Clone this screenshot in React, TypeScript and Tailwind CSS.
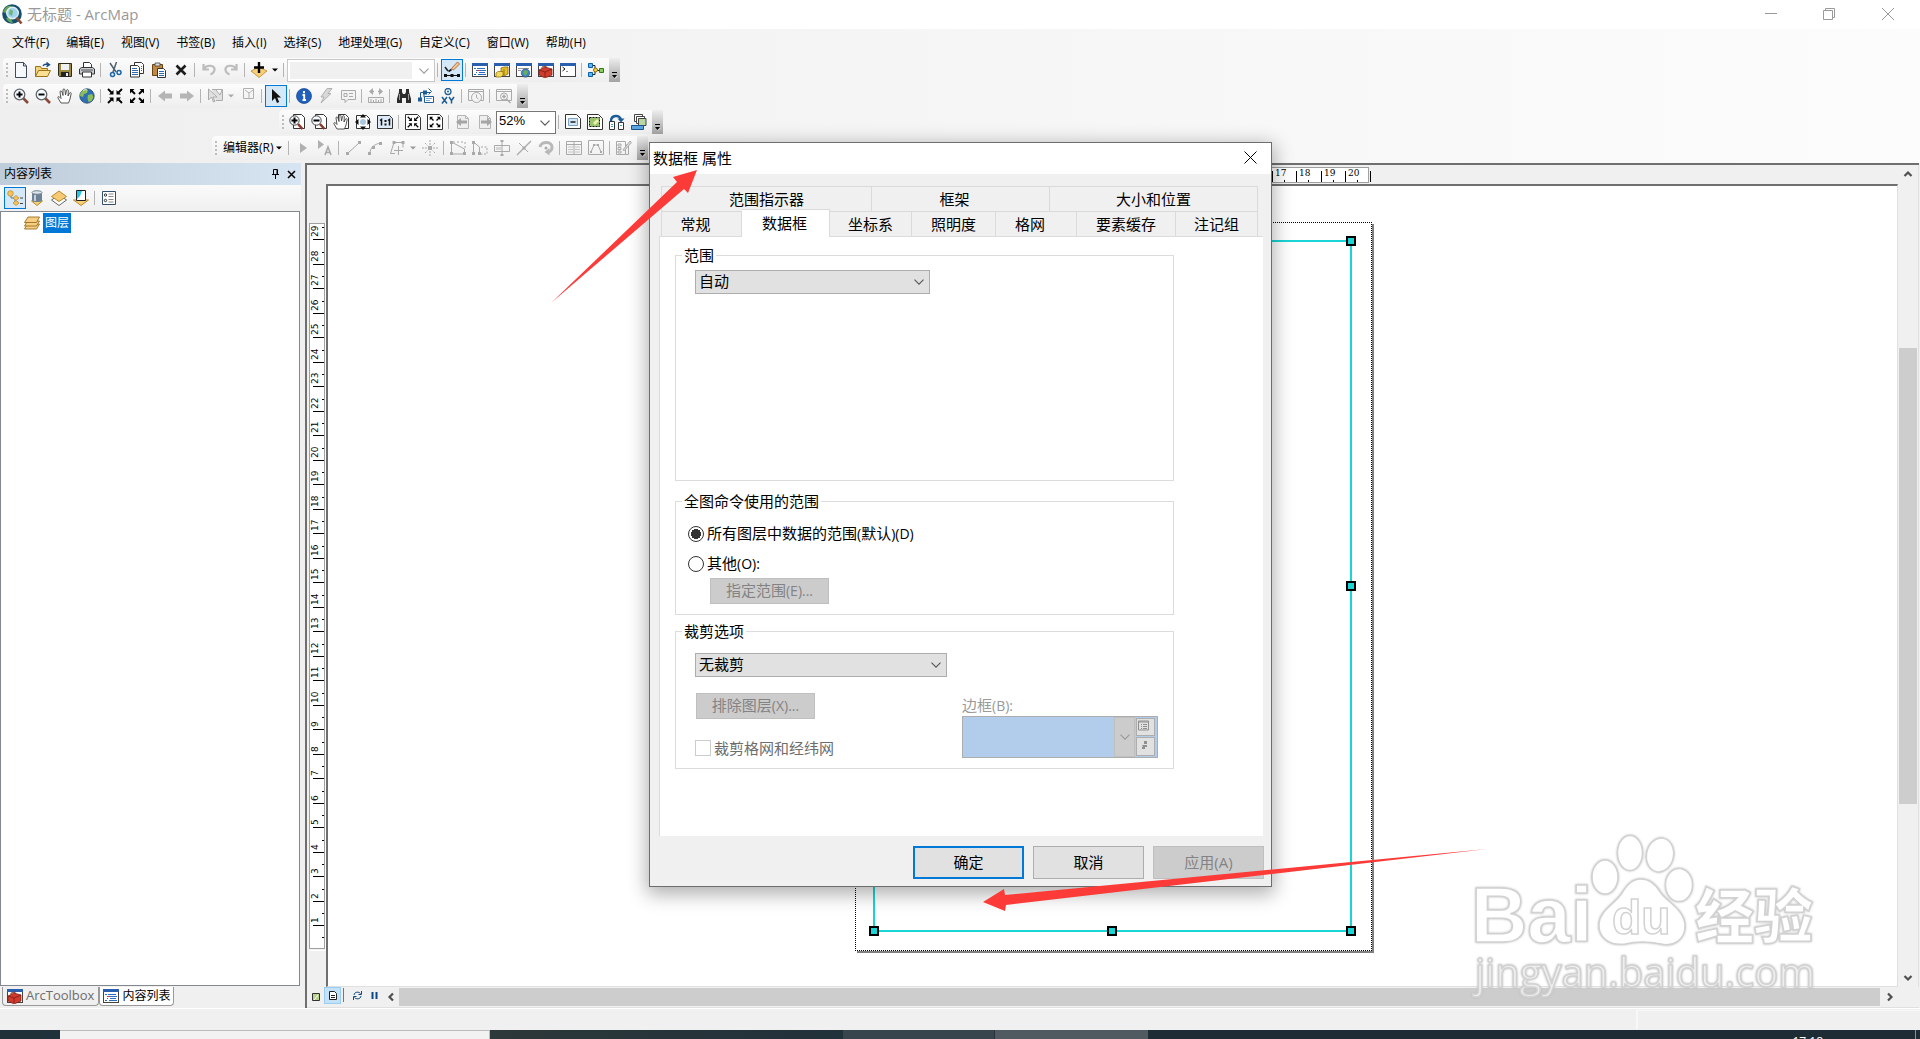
import React from "react";

const FONT = "font-['Open_Sans','Noto_Sans_CJK_SC',sans-serif]";

type Kids = { children?: React.ReactNode };

function Ic({ children }: Kids) {
  return (
    <svg width="16" height="16" viewBox="0 0 16 16" fill="none" aria-hidden="true">
      {children}
    </svg>
  );
}

function Tool({ label, active, children }: Kids & { label: string; active?: boolean }) {
  return (
    <button
      type="button"
      aria-label={label}
      className={
        active
          ? "flex h-[22px] w-[22px] items-center justify-center border border-[#0078d7] bg-[#d5e8f7]"
          : "flex h-[22px] w-[22px] items-center justify-center"
      }
    >
      {children}
    </button>
  );
}

const Sep = () => <span className="mx-[2px] h-[14px] w-[2px] border-l border-[#b4b4b4]" />;

const Grip = () => (
  <span className="ml-[3px] mr-px flex w-[3px] flex-col gap-[2px]">
    {[0, 1, 2, 3].map((i) => (
      <span key={i} className="h-[2px] w-[2px] bg-[#bdbdbd]" />
    ))}
  </span>
);

const DropArrow = ({ color = "#000" }: { color?: string }) => (
  <svg width="11" height="8" viewBox="0 0 11 8" aria-hidden="true">
    <path d="M2 2.5h6l-3 3z" fill={color} />
  </svg>
);

const Cap = () => (
  <button
    type="button"
    aria-label="工具栏选项"
    className="ml-[2px] flex h-full w-[11px] items-end justify-center bg-linear-to-b from-[#eeeeee] to-[#a3a3a3] pb-[3px]"
  >
    <svg width="7" height="7" viewBox="0 0 7 7" aria-hidden="true">
      <path d="M1 .5h5" stroke="#000" />
      <path d="M1 3h5L3.5 6z" fill="#000" />
      <path d="M6.5 4L4 6.5" stroke="#fff" strokeWidth=".7" />
    </svg>
  </button>
);

const Chevron = ({ color = "#555" }: { color?: string }) => (
  <svg width="10" height="6" viewBox="0 0 10 6" fill="none" aria-hidden="true">
    <path d="M.5 .7L5 5.2 9.5 .7" stroke={color} strokeWidth="1.1" />
  </svg>
);

/* ---------- icon drawings ---------- */
const Sheet = ({ c = "#333", f = "#fff" }: { c?: string; f?: string }) => (
  <path d="M2.5 1.5h8l3 3v10h-11zM10.5 1.5v3h3" stroke={c} fill={f} />
);
const Win = ({ children }: Kids) => (
  <Ic>
    <rect x=".5" y="1.5" width="15" height="13" fill="#fff" stroke="#444" />
    <path d="M0 2.5h16" stroke="#2a5fae" strokeWidth="3" />
    {children}
  </Ic>
);
const NewI = <Ic><path d="M2.500.5h8l3 3.500v11.500h-11z" fill="#f5f9fe" stroke="#3d4a5c" /><path d="M10.500.5v3.500h3" stroke="#3d4a5c" /></Ic>;
const OpenI = (
  <Ic>
    <path d="M.5 14.500v-10h5l1 2h6v3" fill="#f3d27a" stroke="#9a741c" />
    <path d="M.5 14.500l3-6h12l-3 6z" fill="#fbdf92" stroke="#9a741c" />
    <path d="M8 4c1-2 3-2 5-1.500M11.500.500l3 2.200-3 2" stroke="#1d4f86" strokeWidth="1.400" />
  </Ic>
);
const SaveI = (
  <Ic>
    <path d="M1.500 1.500h13v13h-12l-1-1z" fill="#9b8a3e" stroke="#2f2c1c" />
    <path d="M4 2h8v6H4z" fill="#eef1f6" /><path d="M4 10h8v5H4z" fill="#222" /><path d="M9 11h2v3H9z" fill="#eee" />
  </Ic>
);
const PrintI = (
  <Ic>
    <path d="M4.500 6V.5h6l2 2V6" fill="#fff" stroke="#333" />
    <path d="M.5 7l2-1.500h11l2 1.500v5h-15z" fill="#c9ccd0" stroke="#333" />
    <path d="M3.500 10h9v5h-9z" fill="#fff" stroke="#333" /><path d="M2 8h12" stroke="#555" />
  </Ic>
);
const CutI = (
  <Ic>
    <path d="M3 1l6 9M9.500 0L6 10" stroke="#4e6070" strokeWidth="1.500" />
    <circle cx="5.500" cy="12.500" r="2" stroke="#1f64a5" strokeWidth="1.500" /><circle cx="12" cy="10.500" r="2" stroke="#1f64a5" strokeWidth="1.500" />
  </Ic>
);
const CopyI = (
  <Ic>
    <path d="M5.500.5h7l2 2v9h-9z" fill="#fff" stroke="#333" />
    <path d="M1.500 3.500h7l2 2v9.500h-9z" fill="#fff" stroke="#333" />
    <path d="M3 6.500h5M3 8.500h6M3 10.500h6M3 12.500h6M12 4.500h1M12 6.500h1M12 8.500h1" stroke="#2d69ae" />
  </Ic>
);
const PasteI = (
  <Ic>
    <path d="M1.500 2.500h10v11h-10z" fill="#c08840" stroke="#6b4313" />
    <path d="M4 1h5v3H4z" fill="#ddd" stroke="#444" strokeWidth=".8" />
    <path d="M6.500 6.500h6l2 2v7h-8z" fill="#fff" stroke="#333" />
    <path d="M8 9.500h5M8 11.500h5M8 13.500h5" stroke="#2d69ae" />
  </Ic>
);
const DelI = <Ic><path d="M3.500 3.500l9 9M12.500 3.500l-9 9" stroke="#1c1c1c" strokeWidth="2.600" /></Ic>;
const UndoI = <Ic><path d="M2.500 2v5.500H8M3 7c2-4 9-4.500 10.500-.5.500 2.500-1 4.500-4 6" stroke="#bdbdbd" strokeWidth="2.200" /></Ic>;
const RedoI = <Ic><path d="M13.500 2v5.500H8M13 7c-2-4-9-4.500-10.500-.5-.5 2.500 1 4.500 4 6" stroke="#bdbdbd" strokeWidth="2.200" /></Ic>;
const AddI = (
  <Ic>
    <path d="M0 9l8-4 8 4-8 6.500z" fill="#f6cf78" stroke="#b98a2a" strokeWidth=".8" />
    <path d="M8 0v11M3 5.500h10" stroke="#000" strokeWidth="2.400" />
  </Ic>
);
const EditI = (
  <Ic>
    <path d="M1 5l3 4" stroke="#222" strokeWidth="1.500" /><path d="M7.500 6.500L13.500 0l2 2-6 6z" fill="#f5c98b" stroke="#a3502c" strokeWidth=".8" /><path d="M4.500 9.500L7.500 7.500" stroke="#111" strokeWidth="1.600" />
    <path d="M1 13.500h14" stroke="#111" /><path d="M0 12h3v3H0zM6.500 12h3v3h-3zM13 12h3v3h-3z" fill="#111" />
  </Ic>
);
const TocI = <Win><path d="M2 6.500h2M5 6.500h8M4 8.500h2M7 8.500h7M4 10.500h1M7 10.500h6M2 12.500h2M6 12.500h8" stroke="#2a6cc0" /><path d="M5 8.500h2" stroke="#d33" /></Win>;
const CatI = <Win><path d="M7 10V6l3-1h4v7l-4 2z" fill="#e5bd27" stroke="#8a6b06" strokeWidth=".8" /><path d="M10 7v6" stroke="#8a6b06" strokeWidth=".8" /><path d="M2 11l2-1.500h5V13l-2 2H2z" fill="#f3d95d" stroke="#8a6b06" strokeWidth=".7" /></Win>;
const SearchI = <Win><path d="M2 6.500h11M2 8.500h3" stroke="#999" /><circle cx="9.500" cy="11" r="4.200" fill="#3a83c9" stroke="#345" strokeWidth=".6" /><path d="M7 10l2-2 3 1-1 3-2 2z" fill="#6cae57" /></Win>;
const ToolboxI = <Win><path d="M1 8l6-3 7 2v6l-7 3-6-3z" fill="#cf3b2c" stroke="#7c1a12" strokeWidth=".7" /><path d="M1 8l6 2 7-3M7 10v5M4 6.500V5l4-1v2" stroke="#7c1a12" strokeWidth=".8" /></Win>;
const PyI = <Win><path d="M2.500 5l2.500 2-2.500 2" stroke="#111" /><path d="M6 9.500h2" stroke="#888" /></Win>;
const ModelI = (
  <Ic>
    <path d="M4 3.500h3v5M4 12.500h3v-4h5" stroke="#222" />
    <path d="M.5 1.500h4v4h-4zM.5 10.500h4v4h-4z" fill="#5db6f0" stroke="#0a61a5" /><circle cx="7.500" cy="8" r="2" fill="#f3d149" stroke="#8a6b06" /><path d="M11.500 6.500h4v4h-4z" fill="#86cf5d" stroke="#2f7a17" />
  </Ic>
);
const Zoomer = ({ plus }: { plus?: boolean }) => (
  <Ic>
    <path d="M10 10l5 5" stroke="#8a4a3a" strokeWidth="2.600" /><circle cx="6.500" cy="6.500" r="5.300" fill="#f4f9fd" stroke="#60666c" strokeWidth="1.300" />
    <path d={plus ? "M3.500 6.500h6M6.500 3.500v6" : "M3.500 6.500h6"} stroke="#000" strokeWidth="1.900" />
  </Ic>
);
const Hand = () => (
  <path d="M4 15l-3-5c-.5-1.500 1-2 2-.5l1 1L3 4c0-1.500 1.500-1.500 2 0l1 3.500V2c0-1.500 1.700-1.500 2 0l.5 5 1-4.500c.5-1.500 2-1 1.800.5L11 8l1.500-3c1-1 2-.3 1.600 1L13 11l-1.500 4z" fill="#fff" stroke="#444" strokeWidth=".9" />
);
const GlobeI = (
  <Ic>
    <circle cx="8" cy="8" r="7.200" fill="#2f6fb3" stroke="#24456c" strokeWidth=".8" />
    <path d="M3 3c2-2 5-2 6-1l-1 3-3 1-1 3-3-1c0-2 1-4 2-5zM9 7l4-1 1.500 3-2 4-3 1-1-4z" fill="#8cbf5a" /><path d="M4 2.500c2-1 3-1 4-.5" stroke="#e8f3dc" />
  </Ic>
);
const InArrows = ({ c = "#000" }: { c?: string }) => (
  <>
    <path d="M1 1l3.500 3.500M15 1l-3.500 3.500M1 15l3.500-3.500M15 15l-3.500-3.500" stroke={c} strokeWidth="1.800" />
    <path d="M6.500 2v4.500H2zM9.500 2v4.500H14zM6.500 14V9.500H2zM9.500 14V9.500H14z" fill={c} />
  </>
);
const OutArrows = ({ c = "#000" }: { c?: string }) => (
  <>
    <path d="M2 2l4 4M14 2l-4 4M2 14l4-4M14 14l-4-4" stroke={c} strokeWidth="1.800" />
    <path d="M1 5.500V1h4.500zM15 5.500V1h-4.500zM1 10.500V15h4.500zM15 10.500V15h-4.500z" fill={c} />
  </>
);
const LeftI = <Ic><path d="M1 8l7-5.500v3h7v5H8v3z" fill="#b5b5b5" /></Ic>;
const RightI = <Ic><path d="M15 8L8 2.500v3H1v5h7v3z" fill="#b5b5b5" /></Ic>;
const SelFeatI = <Ic><path d="M5 1.500h10.500v11H9M9 2l4 5 2-5M1.500 1v11l3-3 2 5 1.500-.7-2-4.300h4z" fill="#e0e0e0" stroke="#aaa" /></Ic>;
const ClearI = <Ic><path d="M3.500.5h10v10h-10zM5 2l4 3 4-3M9 5v5" stroke="#b0b0b0" /></Ic>;
const PointerI = <Ic><path d="M4 1v12l3-3 2 5 2.200-1-2-4.500H13z" fill="#111" /></Ic>;
const InfoI = <Ic><circle cx="8" cy="8" r="7.500" fill="#1f5fbd" stroke="#164488" strokeWidth=".7" /><path d="M8 3v2.200M6.500 7H8.200v5M6.500 12h3.500" stroke="#fff" strokeWidth="1.900" /></Ic>;
const BoltI = <Ic><path d="M9 .5h5l-4 5h3L3 15l3-6H3z" fill="#d8d8d8" stroke="#b0b0b0" /></Ic>;
const NoteI = <Ic><path d="M1.500 2.500h14v9H8l-3 3v-3H1.500z" fill="#f3f3f3" stroke="#aaa" /><path d="M4 5.500h3v3H4zM9 5.500h4M9 8.500h4" stroke="#aaa" /></Ic>;
const MeasureI = <Ic><path d="M2 3.500h4M10 3.500h4" stroke="#aaa" strokeWidth="1.600" /><path d="M5 0v7L1 3.500zM11 0v7l4-3.500z" fill="#aaa" /><path d="M.5 9.500h15v5H.5zM3 14v-3M5.500 14v-2M8 14v-3M10.500 14v-2M13 14v-3" stroke="#aaa" /></Ic>;
const FindI = <Ic><path d="M3 1h3v3l1 2h2l1-2V1h3v3l2 7v4h-5v-5H6v5H1v-4l2-7z" fill="#2b2b2b" /><path d="M3.500 6v6M12.500 6v6" stroke="#999" /></Ic>;
const RouteI = <Ic><path d="M2.500 11V4.500H13M6 9V4.500M10.500.5l3 3-3 3" stroke="#1d5d96" /><path d="M0 9.500h4v4H0zM5 2.500h4v4H5z" fill="#1d5d96" /><path d="M6.500 8.500h9v6h-9z" fill="#fff" stroke="#1d5d96" /><path d="M8 10.500h6M8 12.500h4" stroke="#7ba6cb" /></Ic>;
const XyI = <Ic><circle cx="8" cy="3.500" r="3" stroke="#1d5d96" strokeWidth="1.300" /><circle cx="8" cy="3.500" r="1" fill="#1d5d96" /><path d="M2 9l5 6.500M7 9l-5 6.500M9 9l2.500 3.500v3M14 9l-2.500 3.500" stroke="#1d5d96" strokeWidth="1.500" /></Ic>;
const TimeI = <Ic><path d="M.5 1.500h15v11H.5zM.5 3.500h15" stroke="#aaa" /><circle cx="8.500" cy="9.500" r="5" fill="#f4f4f4" stroke="#aaa" /><path d="M8.500 6.500v3l2 1.500" stroke="#aaa" /></Ic>;
const ViewerI = <Ic><path d="M.5 1.500h15v11H.5zM.5 3.500h15" stroke="#aaa" /><circle cx="8" cy="8.500" r="3.500" fill="#f4f4f4" stroke="#aaa" /><path d="M6 8.500h4M8 6.500v4M10.500 11l4 4" stroke="#aaa" strokeWidth="1.300" /></Ic>;
const LZoom = ({ plus }: { plus?: boolean }) => (
  <Ic>
    <path d="M4.500.5h8l3 3v11h-11z" fill="#fff" stroke="#333" /><path d="M9 10l4.500 5" stroke="#8a3a2a" strokeWidth="2.600" />
    <circle cx="5.500" cy="6.500" r="4.700" fill="#f4f9fd" stroke="#444" /><path d={plus ? "M2.500 6.500h6M5.500 3.500v6" : "M2.500 6.500h6"} stroke="#000" strokeWidth="2" />
  </Ic>
);
const LPanI = <Ic><path d="M5.500.5h7l3 3v11h-10z" fill="#fff" stroke="#333" /><Hand /></Ic>;
const LWholeI = <Ic><path d="M1.500 1.500h10l3 3v10h-13z" fill="#fff" stroke="#333" /><path d="M8 0l3 3.500H5zM8 16l3-3.500H5zM0 8l3.500-3v6zM16 8l-3.500-3v6z" fill="#111" /><circle cx="8" cy="8" r="3" fill="#aac9e0" /></Ic>;
const L11I = <Ic><path d="M.5 1.500h12l3 3v10H.5z" fill="#dcebf7" stroke="#333" /><path d="M3 6.500l1.500-1v6M11 6.500l1.500-1v6" stroke="#111" strokeWidth="1.500" /><path d="M7.500 6h2v2h-2zM7.500 9.500h2v2h-2z" fill="#111" /></Ic>;
const LInI = <Ic><path d="M.5.5h12l3 3v12H.5z" fill="#fff" stroke="#333" /><g transform="translate(2 2) scale(.75)"><InArrows /></g></Ic>;
const LOutI = <Ic><path d="M.5.5h12l3 3v12H.5z" fill="#fff" stroke="#333" /><g transform="translate(2 2) scale(.75)"><OutArrows /></g></Ic>;
const LBackI = <Ic><Sheet c="#b5b5b5" f="#eee" /><path d="M1 8l5-4v2.500h6v3H6V12z" fill="#a5a5a5" /></Ic>;
const LFwdI = <Ic><Sheet c="#b5b5b5" f="#eee" /><path d="M15 8l-5-4v2.500H4v3h6V12z" fill="#a5a5a5" /></Ic>;
const LDraftI = <Ic><path d="M.5.5h11l4 4v10H.5z" fill="#fff" stroke="#333" /><path d="M3.500 4.500h9v7h-9z" fill="#d5e6f5" stroke="#7aa3c8" /><path d="M5.500 8h5" stroke="#111" strokeWidth="1.400" /></Ic>;
const LFocusI = <Ic><path d="M.5.5h11l4 4v11H.5z" fill="#fff" stroke="#333" /><path d="M2.500 3.500h10v9h-10z" fill="#9cc46a" stroke="#111" strokeDasharray="2 1" /><path d="M6 9l4-4 2 2-4 4z" fill="#eef0b0" /></Ic>;
const LChangeI = <Ic><path d="M2 7c0-6 9-7 10-1" stroke="#1d5d96" strokeWidth="2.400" /><path d="M8.500 4.500h7l-3.500 4z" fill="#1d5d96" /><path d="M.5 7.500h5v8h-5zM9.500 8.500h5v7h-5z" fill="#fff" stroke="#333" /><path d="M2 10.500h2M2 12.500h2M11 11.500h2" stroke="#4a9" /></Ic>;
const LDdpI = <Ic><path d="M3.500.5h8v7h-8z" fill="#fff" stroke="#444" /><path d="M5.500 2.500h8v7h-8z" fill="#fff" stroke="#444" /><path d="M7.500 4.500h7.500v7h-7.500z" fill="#b9d7a5" stroke="#444" /><path d="M.5 11.500h12v4H.5z" fill="#5ba4e0" stroke="#17568f" /></Ic>;

const g = "#a9a9a9";
const EArrI = <Ic><path d="M5 3v10l7-5z" fill="#b0b0b0" /></Ic>;
const EAnnI = <Ic><path d="M1 0v9l6-4.500z" fill="#b0b0b0" /><path d="M8 15l3-8 3 8M9 12.500h4" stroke={g} strokeWidth="1.600" /></Ic>;
const ELineI = <Ic><path d="M3 13L14 3" stroke={g} /><path d="M1 12h3v3H1zM13 1h3v3h-3z" fill={g} /></Ic>;
const EArcI = <Ic><path d="M3 13c0-5 4-9 11-10" stroke={g} /><path d="M1 12h3v3H1zM5 6h3v3H5zM12 2h3v3h-3z" fill={g} /></Ic>;
const ETraceI = <Ic><path d="M1.500 13.500L5 2.500h9v5M1.500 13.500H6M9.500 6v9M5 10.500h9" stroke={g} /><path d="M3.500 1h3v3h-3zM12.500 1h3v3h-3z" fill={g} /></Ic>;
const EPointI = <Ic><path d="M8 0v5M8 11v5M0 8h5M11 8h5M3 3l2.500 2.500M13 3l-2.500 2.500M3 13l2.500-2.500M13 13l-2.500-2.500" stroke={g} strokeDasharray="2 1" /><path d="M6 6h4v4H6z" fill={g} /></Ic>;
const EVertI = <Ic><path d="M1.500 2v12h13V9L1.500 2" stroke={g} /><path d="M3 2h12v7" stroke={g} strokeDasharray="2 2" /><path d="M0 1h3v3H0zM0 12h3v3H0zM13 12h3v3h-3z" fill={g} /></Ic>;
const EReshI = <Ic><path d="M1.500 2v12M1.500 2l6 5v7" stroke={g} /><path d="M9 7h6v7H9" stroke={g} strokeDasharray="2 1.500" /><path d="M0 1h3v3H0zM0 12h3v3H0zM6 12h3v3H6z" fill={g} /></Ic>;
const ECutI = <Ic><path d="M.5 5.500h15v6H.5zM8 0v16" stroke={g} /><path d="M2 7h5v3H2z" fill="#d5d5d5" /><path d="M6.500 0h3v2h-3zM6.500 14h3v2h-3z" fill={g} /></Ic>;
const ESplitI = <Ic><path d="M1 15L15 1" stroke={g} strokeWidth="1.300" /><path d="M3 3l9 9" stroke={g} strokeDasharray="5 3" /><path d="M6.500 6.500h3v3h-3z" fill={g} /></Ic>;
const ERotI = <Ic><path d="M2 7c1-6 12-6 12 0 0 3-2 5-4 5" stroke="#b8b8b8" strokeWidth="3" /><path d="M6.500 12l5-4v7.500z" fill="#b8b8b8" /><circle cx="8" cy="8" r="1.500" fill={g} /></Ic>;
const EAttrI = <Ic><path d="M.5 1.500h15v13H.5zM.5 4.500h15M8 2v12" stroke={g} /><path d="M2 7h5M2 9.500h5M2 12h5M9 7h5M9 9.500h5M9 12h5" stroke="#c5c5c5" /></Ic>;
const ESkI = <Ic><path d="M.5.500h15v14H.5zM3 12l3-7h4l3 7" stroke={g} /><path d="M5 4h2v2H5zM9 4h2v2H9zM2 11h2v2H2zM12 11h2v2h-2z" fill={g} /></Ic>;
const ECreateI = <Ic><path d="M.5 1.500h9v13h-9zM9.500 5h3v9.500h-3z" stroke={g} /><path d="M2 4h3v2H2zM2 7.500h3v2H2zM2 11h3v2H2z" stroke={g} /><path d="M7 10l7-9 1.500 1.500-7 8z" fill="#ddd" stroke={g} /></Ic>;

const TreeI = <Ic><path d="M4 4v4h4M8 8v4h3" stroke="#5a7d96" /><circle cx="3.500" cy="3.500" r="2.800" fill="#f6c45f" stroke="#b98427" strokeWidth=".7" /><path d="M6 8l3-2.500L12 8l-3 2.500zM6 13l3-2.500L12 13l-3 2.500z" fill="#f6c45f" stroke="#b98427" strokeWidth=".7" /><path d="M13 8h3M13 13.500h3" stroke="#444" /></Ic>;
const SourceI = <Ic><path d="M2.500 11h11L8 15.500z" fill="#f6cf78" stroke="#b98a2a" /><path d="M3 2.500v8c2 2 8 2 10 0v-8z" fill="#6e8296" /><ellipse cx="8" cy="2.500" rx="5" ry="1.800" fill="#dfe6ec" stroke="#6e8296" /><path d="M6 5v6" stroke="#c5d0da" strokeWidth="2" /></Ic>;
const VisI = <Ic><path d="M.5 10L8 5l7.500 5L8 15.500z" fill="#fff" stroke="#666" /><path d="M.5 6.500L8 1l7.500 5.500L8 11.500z" fill="#f6c976" stroke="#b98a2a" /></Ic>;
const SelI = <Ic><path d="M.5 10h15L8 15.500z" fill="#f6cf78" stroke="#b98a2a" /><path d="M3.500.5h9v10h-9z" fill="#fff" stroke="#222" /><path d="M4 1h5l-2 5-3 3z" fill="#24c7ea" /></Ic>;
const OptI = <Ic><path d="M1.500 1.500h13v13h-13z" fill="#fff" stroke="#33516e" /><circle cx="4.500" cy="5" r="1.200" stroke="#333" /><circle cx="4.500" cy="10.500" r="1.200" stroke="#333" /><path d="M7.500 4h5M7.500 6.500h5M7.500 9.500h5M7.500 12h5" stroke="#888" /></Ic>;

const menus = ["文件(F)", "编辑(E)", "视图(V)", "书签(B)", "插入(I)", "选择(S)", "地理处理(G)", "自定义(C)", "窗口(W)", "帮助(H)"];

function Bar({ children, start = "" }: Kids & { start?: string }) {
  return (
    <div
      role="toolbar"
      className={`flex h-6 w-fit items-center rounded-l-sm bg-linear-to-b from-[#fcfcfc] to-[#eeeeee] ${start}`}
    >
      {children}
    </div>
  );
}

function Toolbars() {
  return (
    <div className="flex flex-col gap-[2px] pl-[3px] pt-[2px]">
      <Bar>
        <Grip />
        <Tool label="新建">{NewI}</Tool><Tool label="打开">{OpenI}</Tool><Tool label="保存">{SaveI}</Tool><Tool label="打印">{PrintI}</Tool>
        <Sep />
        <Tool label="剪切">{CutI}</Tool><Tool label="复制">{CopyI}</Tool><Tool label="粘贴">{PasteI}</Tool><Tool label="删除">{DelI}</Tool>
        <Sep />
        <Tool label="撤消">{UndoI}</Tool><Tool label="恢复">{RedoI}</Tool>
        <Sep />
        <Tool label="添加数据">{AddI}</Tool><DropArrow />
        <Sep />
        <div className="relative h-[23px] w-[148px] border border-[#c8c8c8] bg-white p-[2px]">
          <select aria-label="比例" disabled className="h-full w-[122px] appearance-none bg-[#f0f0f0]" />
          <span className="absolute right-[5px] top-[8px]"><Chevron color="#999" /></span>
        </div>
        <Sep />
        <Tool label="编辑器工具条" active>{EditI}</Tool>
        <Sep />
        <Tool label="内容列表">{TocI}</Tool><Tool label="目录">{CatI}</Tool><Tool label="搜索">{SearchI}</Tool><Tool label="ArcToolbox">{ToolboxI}</Tool><Tool label="Python">{PyI}</Tool>
        <Sep />
        <Tool label="模型构建器">{ModelI}</Tool>
        <Cap />
      </Bar>
      <Bar>
        <Grip />
        <Tool label="放大"><Zoomer plus /></Tool><Tool label="缩小"><Zoomer /></Tool><Tool label="平移"><Ic><Hand /></Ic></Tool><Tool label="全图">{GlobeI}</Tool>
        <Sep />
        <Tool label="固定比例放大"><Ic><InArrows /></Ic></Tool><Tool label="固定比例缩小"><Ic><OutArrows /></Ic></Tool>
        <Sep />
        <Tool label="后退">{LeftI}</Tool><Tool label="前进">{RightI}</Tool>
        <Sep />
        <Tool label="选择要素">{SelFeatI}</Tool><DropArrow color="#aaa" /><Tool label="清除选择">{ClearI}</Tool>
        <Sep />
        <Tool label="选择元素" active>{PointerI}</Tool>
        <Sep />
        <Tool label="识别">{InfoI}</Tool><Tool label="超链接">{BoltI}</Tool><Tool label="HTML 弹出">{NoteI}</Tool>
        <Sep />
        <Tool label="测量">{MeasureI}</Tool>
        <Sep />
        <Tool label="查找">{FindI}</Tool><Tool label="查找路径">{RouteI}</Tool><Tool label="转到 XY">{XyI}</Tool>
        <Sep />
        <Tool label="时间滑块">{TimeI}</Tool>
        <Sep />
        <Tool label="查看器">{ViewerI}</Tool>
        <Cap />
      </Bar>
      <Bar start="ml-[276px]">
        <Grip />
        <Tool label="布局放大"><LZoom plus /></Tool><Tool label="布局缩小"><LZoom /></Tool><Tool label="布局平移">{LPanI}</Tool><Tool label="缩放整个页面">{LWholeI}</Tool><Tool label="缩放至 100%">{L11I}</Tool>
        <Sep />
        <Tool label="布局固定放大">{LInI}</Tool><Tool label="布局固定缩小">{LOutI}</Tool>
        <Sep />
        <Tool label="返回范围">{LBackI}</Tool><Tool label="前进范围">{LFwdI}</Tool>
        <div className="relative h-[23px] w-[60px] border border-[#777] bg-white">
          <select aria-label="缩放比例" className="block h-full w-full appearance-none pb-[2px] pl-[2px] font-['Liberation_Sans',sans-serif] text-[13px] leading-[18px]">
            <option>52%</option>
          </select>
          <span className="pointer-events-none absolute right-[5px] top-[8px]"><Chevron /></span>
        </div>
        <Sep />
        <Tool label="草图模式">{LDraftI}</Tool><Tool label="焦点数据框">{LFocusI}</Tool><Tool label="更改布局">{LChangeI}</Tool><Tool label="数据驱动页面">{LDdpI}</Tool>
        <Cap />
      </Bar>
      <Bar start="ml-[209px]">
        <Grip />
        <button type="button" className="flex h-[22px] w-[67px] items-center whitespace-nowrap pl-1 text-xs">
          编辑器(R)<DropArrow />
        </button>
        <Sep />
        <Tool label="编辑工具">{EArrI}</Tool><Tool label="编辑注记">{EAnnI}</Tool>
        <Sep />
        <Tool label="直线段">{ELineI}</Tool><Tool label="弧段">{EArcI}</Tool><Tool label="追踪">{ETraceI}</Tool><DropArrow color="#999" /><Tool label="点">{EPointI}</Tool>
        <Sep />
        <Tool label="编辑折点">{EVertI}</Tool><Tool label="整形要素">{EReshI}</Tool><Tool label="裁剪面">{ECutI}</Tool><Tool label="分割">{ESplitI}</Tool><Tool label="旋转">{ERotI}</Tool>
        <Sep />
        <Tool label="属性">{EAttrI}</Tool><Tool label="草图属性">{ESkI}</Tool>
        <Sep />
        <Tool label="创建要素">{ECreateI}</Tool>
        <Cap />
      </Bar>
    </div>
  );
}

function Toc() {
  return (
    <aside className="flex w-[301px] shrink-0 flex-col text-xs">
      <header className="flex h-[22px] items-center bg-linear-to-r from-[#bfcddb] to-[#d7e4f2] pl-1 pr-[5px]">
        <h2 className="flex-1">内容列表</h2>
        <button type="button" aria-label="自动隐藏" className="w-4">
          <svg width="10" height="10" viewBox="0 0 10 10" fill="none"><path d="M2.500.5h4v5M1 5.500h7M4.500 6v4M2.500 .5v5M6 1v4" stroke="#000" /></svg>
        </button>
        <button type="button" aria-label="关闭">
          <svg width="9" height="9" viewBox="0 0 9 9"><path d="M1 1l7 7M8 1L1 8" stroke="#000" strokeWidth="1.500" /></svg>
        </button>
      </header>
      <div className="flex h-[26px] items-center bg-linear-to-b from-[#fafafa] to-[#f0f0f0] pl-1">
        <Tool label="按绘制顺序列出" active>{TreeI}</Tool><Tool label="按源列出">{SourceI}</Tool><Tool label="按可见性列出">{VisI}</Tool><Tool label="按选择列出">{SelI}</Tool>
        <Sep /><Tool label="选项">{OptI}</Tool>
      </div>
      <div className="mr-px flex-1 border border-[#828790] bg-white pl-[23px] pt-px">
        <div className="flex items-center gap-[3px]">
          <svg width="16" height="14" viewBox="0 0 16 14" aria-hidden="true">
            <g fill="#f6cf83" stroke="#9a6f22" strokeWidth=".9"><path d="M.5 13l3-5h12l-3 5z" /><path d="M.5 10l3-5h12l-3 5z" /><path d="M.5 6.500L4 1h11.500l-3 5.500z" /></g>
          </svg>
          <span className="bg-[#0078d7] px-[2px] leading-[20px] text-white">图层</span>
        </div>
      </div>
      <div role="tablist" className="flex h-[22px] items-start pl-[2px] pt-px">
        <button type="button" role="tab" className="flex h-[19px] items-center gap-[3px] rounded-b border border-t-0 border-[#999] px-1 text-[13px] text-[#6d6d6d]">
          {ToolboxI}ArcToolbox
        </button>
        <button type="button" role="tab" aria-selected="true" className="flex h-[19px] items-center gap-[3px] rounded-b border border-t-0 border-[#999] bg-white px-[3px]">
          {TocI}内容列表
        </button>
      </div>
    </aside>
  );
}

/* Page scale: 24.5 screen pixels stand for one centimetre. */
const CM = 24.5;

function VRuler() {
  const marks = Array.from({ length: 29 }, (_, i) => 29 - i);
  return (
    <svg className="mt-[58px] block" width="17" height="728" aria-label="垂直标尺">
      <rect x=".5" y=".5" width="15" height="725" fill="#fff" stroke="#a0a0a0" />
      <path d="M1 727.500h16M16.500 0v727" stroke="#fff" />
      {marks.map((n) => {
        const y = Math.round(16 + (29 - n) * CM);
        return (
          <g key={n}>
            <path d={`M4 ${y + 0.5}h11M13 ${y - 11.5}h2`} stroke="#000" />
            <text transform={`translate(9 ${y - 2}) rotate(-90)`} fontSize="9" fontFamily="'DejaVu Sans'">{n}</text>
          </g>
        );
      })}
      <path d="M13 714.500h2" stroke="#000" />
    </svg>
  );
}

function HRuler() {
  const marks = Array.from({ length: 21 }, (_, i) => i);
  return (
    <svg className="ml-[529px] mt-[2px] block" width="517" height="17" aria-label="水平标尺">
      <rect x=".5" y=".5" width="513" height="15" fill="#fff" stroke="#a0a0a0" />
      {marks.map((n) => {
        const x = Math.round(n * CM);
        return (
          <g key={n}>
            <path d={`M${x + 0.5} 4v11M${x + 12.5} 13v2`} stroke="#000" />
            <text x={x + 3} y="9" fontSize="9" fontFamily="'DejaVu Serif'">{n}</text>
          </g>
        );
      })}
      <path d="M515.500 4v11" stroke="#000" />
    </svg>
  );
}

const handles = [
  "left-[13px] top-[13px]", "left-[251px] top-[13px]", "left-[490px] top-[13px]",
  "left-[13px] top-[358px]", "left-[490px] top-[358px]",
  "left-[13px] top-[703px]", "left-[251px] top-[703px]", "left-[490px] top-[703px]",
];

function ScrollArrow({ d, label, cls }: { d: string; label: string; cls: string }) {
  return (
    <button type="button" aria-label={label} className={`flex shrink-0 items-center justify-center ${cls}`}>
      <svg width="10" height="10" viewBox="0 0 10 10" fill="none"><path d={d} stroke="#505050" strokeWidth="2.200" /></svg>
    </button>
  );
}

function MapView() {
  return (
    <main className="ml-1 mr-px flex min-w-0 flex-1 flex-col border-l-2 border-t-2 border-[#6f6f6f]">
      <div className="flex min-h-0 flex-1">
        <div className="w-[19px] shrink-0 pl-[2px]"><VRuler /></div>
        <div className="flex min-w-0 flex-1 flex-col">
          <div className="h-[19px] shrink-0"><HRuler /></div>
          <div className="relative flex-1 overflow-hidden border-b border-l-2 border-r border-t-2 border-b-[#e0e0e0] border-l-[#6f6f6f] border-r-[#e0e0e0] border-t-[#6f6f6f] bg-white">
            <div className="absolute left-[527px] top-[36px] h-[729px] w-[517px] border border-dotted border-black bg-white shadow-[2px_2px_0_#808080]">
              <div className="absolute left-[17px] top-[17px] h-[692px] w-[479px] border-2 border-[#1ad5d5]" />
              {handles.map((h) => (
                <span key={h} className={`absolute h-[10px] w-[10px] border-2 border-black bg-[#1ad5d5] ${h}`} />
              ))}
            </div>
          </div>
        </div>
        <div className="flex w-[21px] shrink-0 flex-col items-center border-r border-[#e0e0e0]">
          <ScrollArrow label="向上滚动" d="M1.500 7L5 3.500 8.500 7" cls="h-[18px] w-[18px]" />
          <div className="flex-[165]" />
          <div className="w-[18px] flex-[456] bg-[#cdcdcd]" />
          <div className="flex-[165]" />
          <ScrollArrow label="向下滚动" d="M1.500 3L5 6.500 8.500 3" cls="h-[18px] w-[18px]" />
        </div>
      </div>
      <div className="flex h-[21px] shrink-0 items-center border-b border-[#e0e0e0] pr-5">
        <button type="button" aria-label="数据视图" className="flex w-[17px] justify-center">
          <svg width="8" height="8" viewBox="0 0 8 8"><path d="M.5.5h7v7h-7z" fill="#b6d28c" stroke="#333" /><path d="M2 7l4-5" stroke="#fff" /></svg>
        </button>
        <button type="button" aria-label="布局视图" className="mb-1 flex h-[17px] w-[17px] items-center justify-center border border-[#99cdf3] bg-[#c4e2f7]">
          <svg width="8" height="9" viewBox="0 0 8 9" fill="none"><path d="M.5.5h5l2 2v6h-7zM2 4.500h4M2 6.500h4" fill="#fff" stroke="#222" /></svg>
        </button>
        <span className="mb-1 ml-[2px] h-[14px] w-px bg-[#777]" />
        <button type="button" aria-label="刷新" className="mb-1 ml-[9px] w-[11px]">
          <svg width="9" height="9" viewBox="0 0 9 9" fill="none"><path d="M1 4C1.500.500 6 .500 7.500 2.500M8 5C7.500 8.500 3 8.500 1.500 6.500M8.500 0v3.500H5.500M.5 9V5.500H3.500" stroke="#0d4785" /></svg>
        </button>
        <button type="button" aria-label="暂停" className="mb-1 ml-[7px] w-2">
          <svg width="7" height="7" viewBox="0 0 7 7"><path d="M1.500 0v7M5.500 0v7" stroke="#0d4785" strokeWidth="2" /></svg>
        </button>
        <ScrollArrow label="向左滚动" d="M7 1.500L3.500 5 7 8.500" cls="ml-[3px] h-[18px] w-[17px]" />
        <div className="h-[18px] flex-1 bg-[#cdcdcd]" />
        <ScrollArrow label="向右滚动" d="M3 1.500L6.500 5 3 8.500" cls="h-[18px] w-[19px]" />
      </div>
    </main>
  );
}

function Tab({ children, w }: Kids & { w: string }) {
  return (
    <button type="button" role="tab" className={`h-[25px] border-r border-t border-[#dadada] leading-[22px] ${w}`}>
      {children}
    </button>
  );
}

const Lat = ({ children }: Kids) => <span className="text-[14px]">{children}</span>;

function Group({ title, h, children }: Kids & { title: string; h: string }) {
  return (
    <fieldset className={`w-[499px] border border-[#dcdcdc] ${h}`}>
      <legend className="ml-[6px] h-5 px-[2px] leading-5">{title}</legend>
      {children}
    </fieldset>
  );
}

function Combo({ label, value, w }: { label: string; value: string; w: string }) {
  return (
    <div className={`relative ml-[19px] h-6 border border-[#adadad] bg-[#e1e1e1] ${w}`}>
      <select aria-label={label} className="block h-full w-full appearance-none pb-[2px] pl-[3px] leading-[20px]">
        <option>{value}</option>
      </select>
      <span className="pointer-events-none absolute right-[5px] top-[8px]"><Chevron /></span>
    </div>
  );
}

const disabledBtn = "h-[26px] w-[119px] border border-[#bfbfbf] bg-[#cccccc] pb-[2px] leading-[20px] text-[#838383]";

function Dialog() {
  return (
    <section
      role="dialog"
      aria-label="数据框 属性"
      className="absolute left-[649px] top-[142px] w-[623px] border border-[#6d6d6d] bg-[#f0f0f0] text-[15px] leading-5 shadow-[0_5px_18px_2px_rgba(0,0,0,0.32)]"
    >
      <header className="flex h-[31px] items-center bg-white pb-[2px] pl-[3px] pr-[14px]">
        <h1 className="flex-1">数据框 属性</h1>
        <button type="button" aria-label="关闭">
          <svg width="13" height="13" viewBox="0 0 13 13"><path d="M.5.5l12 12M12.500.5l-12 12" stroke="#000" /></svg>
        </button>
      </header>
      <div className="pl-[9px] pr-[8px] pt-3">
        <div role="tablist" className="ml-[2px] w-[597px] border-l border-[#dadada]">
          <div className="flex">
            <Tab w="w-[210px]">范围指示器</Tab>
            <Tab w="w-[178px] pr-3">框架</Tab>
            <Tab w="w-[208px]">大小和位置</Tab>
          </div>
          <div className="flex">
            <Tab w="w-[80px] pr-3">常规</Tab>
            <button type="button" role="tab" aria-selected="true" className="relative z-10 -mt-[2px] -mb-px h-[28px] w-[88px] border-r border-t border-[#dadada] bg-white pb-[2px] pr-[2px] leading-[22px]">
              数据框
            </button>
            <Tab w="w-[82px]">坐标系</Tab>
            <Tab w="w-[84px]">照明度</Tab>
            <Tab w="w-[81px] pr-3">格网</Tab>
            <Tab w="w-[99px]">要素缓存</Tab>
            <Tab w="w-[82px]">注记组</Tab>
          </div>
        </div>
        <div role="tabpanel" className="flex h-[600px] flex-col border-l border-t border-[#dcdcdc] bg-white pl-[15px] pt-[8px]">
          <Group title="范围" h="h-[236px]">
            <div className="pt-[5px]"><Combo label="范围" value="自动" w="w-[235px]" /></div>
          </Group>
          <div className="h-[10px]" />
          <Group title="全图命令使用的范围" h="h-[124px]">
            <label className="ml-[12px] mt-3 flex items-center gap-[3px]">
              <input type="radio" name="extent" defaultChecked className="h-4 w-4 appearance-none rounded-full border border-[#333] bg-white bg-[radial-gradient(circle,#333_0_5px,transparent_5px)]" />
              <span>所有图层中数据的范围<Lat>(</Lat>默认<Lat>)(D)</Lat></span>
            </label>
            <label className="ml-[12px] mt-[9px] flex items-center gap-[3px]">
              <input type="radio" name="extent" className="h-4 w-4 appearance-none rounded-full border border-[#333] bg-white" />
              <span>其他<Lat>(O):</Lat></span>
            </label>
            <button type="button" disabled className={`${disabledBtn} ml-[34px] mt-1`}>指定范围<Lat>(E)...</Lat></button>
          </Group>
          <div className="h-[6px]" />
          <Group title="裁剪选项" h="h-[148px]">
            <div className="pt-3"><Combo label="裁剪选项" value="无裁剪" w="w-[252px]" /></div>
            <div className="flex">
              <div className="ml-5 mt-4 w-[266px]">
                <button type="button" disabled className={`${disabledBtn} block`}>排除图层<Lat>(X)...</Lat></button>
                <label className="-ml-px mt-[19px] flex items-center gap-[3px] text-[#6d6d6d]">
                  <input type="checkbox" disabled className="h-4 w-4 appearance-none border border-[#cccccc] bg-white" />
                  裁剪格网和经纬网
                </label>
              </div>
              <div className="mt-[18px]">
                <label htmlFor="border-style" className="block text-[#9a9a9a]">边框<Lat>(B):</Lat></label>
                <div className="flex h-[42px] w-[196px] border border-[#adadad] bg-[#b1cdeb]">
                  <select id="border-style" disabled className="min-w-0 flex-1 appearance-none" />
                  <span className="flex w-[21px] items-center justify-center border border-[#bfbfbf] bg-[#cccccc]"><Chevron color="#999" /></span>
                  <div className="ml-px mr-[2px] flex flex-col gap-px py-px">
                    <button type="button" disabled aria-label="样式选择器" className="flex h-[18px] w-[19px] items-center border border-[#adadad] bg-[#e1e1e1] pb-[2px] pl-px">
                      <svg width="12" height="12" viewBox="0 0 12 12" fill="none"><path d="M.5 1h10v9H.5zM.5 2h10M3 4.500h1M5 4.500h4M3 6.500h1M5 6.500h4M3 8.500h1M5 8.500h4" stroke="#8f8f8f" /></svg>
                    </button>
                    <button type="button" disabled aria-label="样式属性" className="flex h-[19px] w-[19px] items-center border border-[#adadad] bg-[#e1e1e1] pb-[2px] pl-1">
                      <svg width="8" height="10" viewBox="0 0 8 10"><path d="M3 0h3v3H3zM1 4h5v2H4v2H1V6h1z" fill="#8f8f8f" /></svg>
                    </button>
                  </div>
                </div>
              </div>
            </div>
          </Group>
        </div>
      </div>
      <footer className="flex justify-end gap-[9px] pb-[7px] pr-[7px] pt-[10px]">
        <button type="button" className="h-[33px] w-[111px] border-2 border-[#0078d7] bg-[#e1e1e1] pb-[2px]">确定</button>
        <button type="button" className="h-[33px] w-[111px] border border-[#adadad] bg-[#e1e1e1] pb-[2px]">取消</button>
        <button type="button" disabled className="h-[33px] w-[111px] border border-[#bfbfbf] bg-[#cccccc] pb-[2px] text-[#838383]">应用(A)</button>
      </footer>
    </section>
  );
}

function Watermark() {
  return (
    <svg className="pointer-events-none absolute bottom-[34px] right-[95px] drop-shadow-[0_0_1px_#bbb]" width="355" height="175" viewBox="0 0 355 175" fill="#fff" stroke="#d2d2d2" strokeWidth="1.500" aria-label="Baidu 经验 jingyan.baidu.com">
      <ellipse cx="135" cy="47" rx="13" ry="17" /><ellipse cx="160" cy="23" rx="12.500" ry="17.500" />
      <ellipse cx="190" cy="25" rx="13.500" ry="17" transform="rotate(12 190 25)" /><ellipse cx="209" cy="55" rx="13.500" ry="16.500" />
      <path d="M171 49c8 0 14 4 20 14 6 9 24 17 24 33 0 14-12 21-24 18-14-3-24-3-36 0-16 2-27-7-26-20 1-14 16-20 23-31 5-8 10-14 19-14z" />
      <text x="1" y="112" fontSize="78" fontWeight="700" fontFamily="'Liberation Sans'">Bai</text>
      <text x="142" y="104" fontSize="48" fontFamily="'Liberation Sans'" fontWeight="700">du</text>
      <text x="225" y="108" fontSize="59" fontWeight="900" fontFamily="'Noto Sans CJK SC'">经验</text>
      <text x="5" y="157" fontSize="40" fillOpacity=".7" fontFamily="'Open Sans'">jingyan.baidu.com</text>
    </svg>
  );
}

export default function App() {
  return (
    <div className={`relative flex h-screen w-full flex-col overflow-hidden bg-[#f0f0f0] text-black ${FONT}`}>
      <header className="flex h-[29px] shrink-0 items-center bg-white pb-px pl-[2px]">
        <svg width="21" height="21" viewBox="0 0 21 21" fill="none" aria-hidden="true">
          <circle cx="10" cy="10" r="9.800" fill="#17506f" />
          <path d="M1 8c1-4 5-7 8-6l1 4-4 4zM4 14l4-1 3 6c-3 0-6-2-7-5z" fill="#63a35a" />
          <circle cx="10.500" cy="9" r="5.800" fill="#9fd3ea" stroke="#e3edf2" strokeWidth="1.400" />
          <path d="M8 5l3 2-1 5-3-2z" fill="#6fb27a" /><path d="M14.500 13.500l5 6" stroke="#8b4a31" strokeWidth="2.600" />
        </svg>
        <h1 className="ml-1 flex-1 text-[15px] leading-5 text-[#999]">无标题 - ArcMap</h1>
        <div className="flex items-center text-[#999]">
          <button type="button" aria-label="最小化" className="flex w-[58px] justify-center"><svg width="12" height="12"><path d="M0 5.500h12" stroke="#999" /></svg></button>
          <button type="button" aria-label="还原" className="flex w-[58px] justify-center"><svg width="12" height="12" fill="none"><path d="M.5 2.500h9v9h-9zM2.500 2V.5h9v9H10" stroke="#999" /></svg></button>
          <button type="button" aria-label="关闭" className="mr-[3px] flex w-[59px] justify-center"><svg width="12" height="12"><path d="M0 0l12 12M12 0L0 12" stroke="#999" /></svg></button>
        </div>
      </header>
      <div className="h-[134px] shrink-0 bg-linear-to-r from-[#efefef] to-[#fcfcfc]">
        <nav className="flex h-[27px] items-center gap-[17px] pl-3 text-xs">
          {menus.map((m) => (
            <button key={m} type="button" className="whitespace-nowrap">{m}</button>
          ))}
        </nav>
        <Toolbars />
      </div>
      <div className="flex min-h-0 flex-1">
        <Toc />
        <MapView />
      </div>
      <footer className="flex h-[22px] shrink-0 justify-end border-t border-white">
        <div className="my-px w-[284px] border-l-2 border-t border-[#f8f8f8]" />
      </footer>
      <div className="flex h-[9px] shrink-0 overflow-hidden bg-[#1e2d35]">
        <div className="w-[60px] bg-[#203139]" />
        <div className="w-[430px] border-r border-t border-[#bbb] bg-[#f2f2f2]" />
        <div className="w-[353px] bg-linear-to-r from-[#2c3839] to-[#21313a]" />
        <div className="w-[152px] border-r border-[#26333a] bg-[#38454d]" />
        <div className="w-[153px] bg-[#515a61]" />
        <div className="flex-1" />
        <time className="mr-[92px] mt-1 text-xs text-white">17:18</time>
        <div className="mr-1 w-px bg-[#8a9195]" />
      </div>
      <Dialog />
      <Watermark />
      <svg className="pointer-events-none absolute inset-0 h-full w-full" fill="#fc3b38" aria-hidden="true">
        <path d="M697 170l-24 7 4 5L551 303l133-114 4 4z" />
        <path d="M983 902l21-13 1 6L1487 849 1006 905l-1 6z" />
      </svg>
    </div>
  );
}
